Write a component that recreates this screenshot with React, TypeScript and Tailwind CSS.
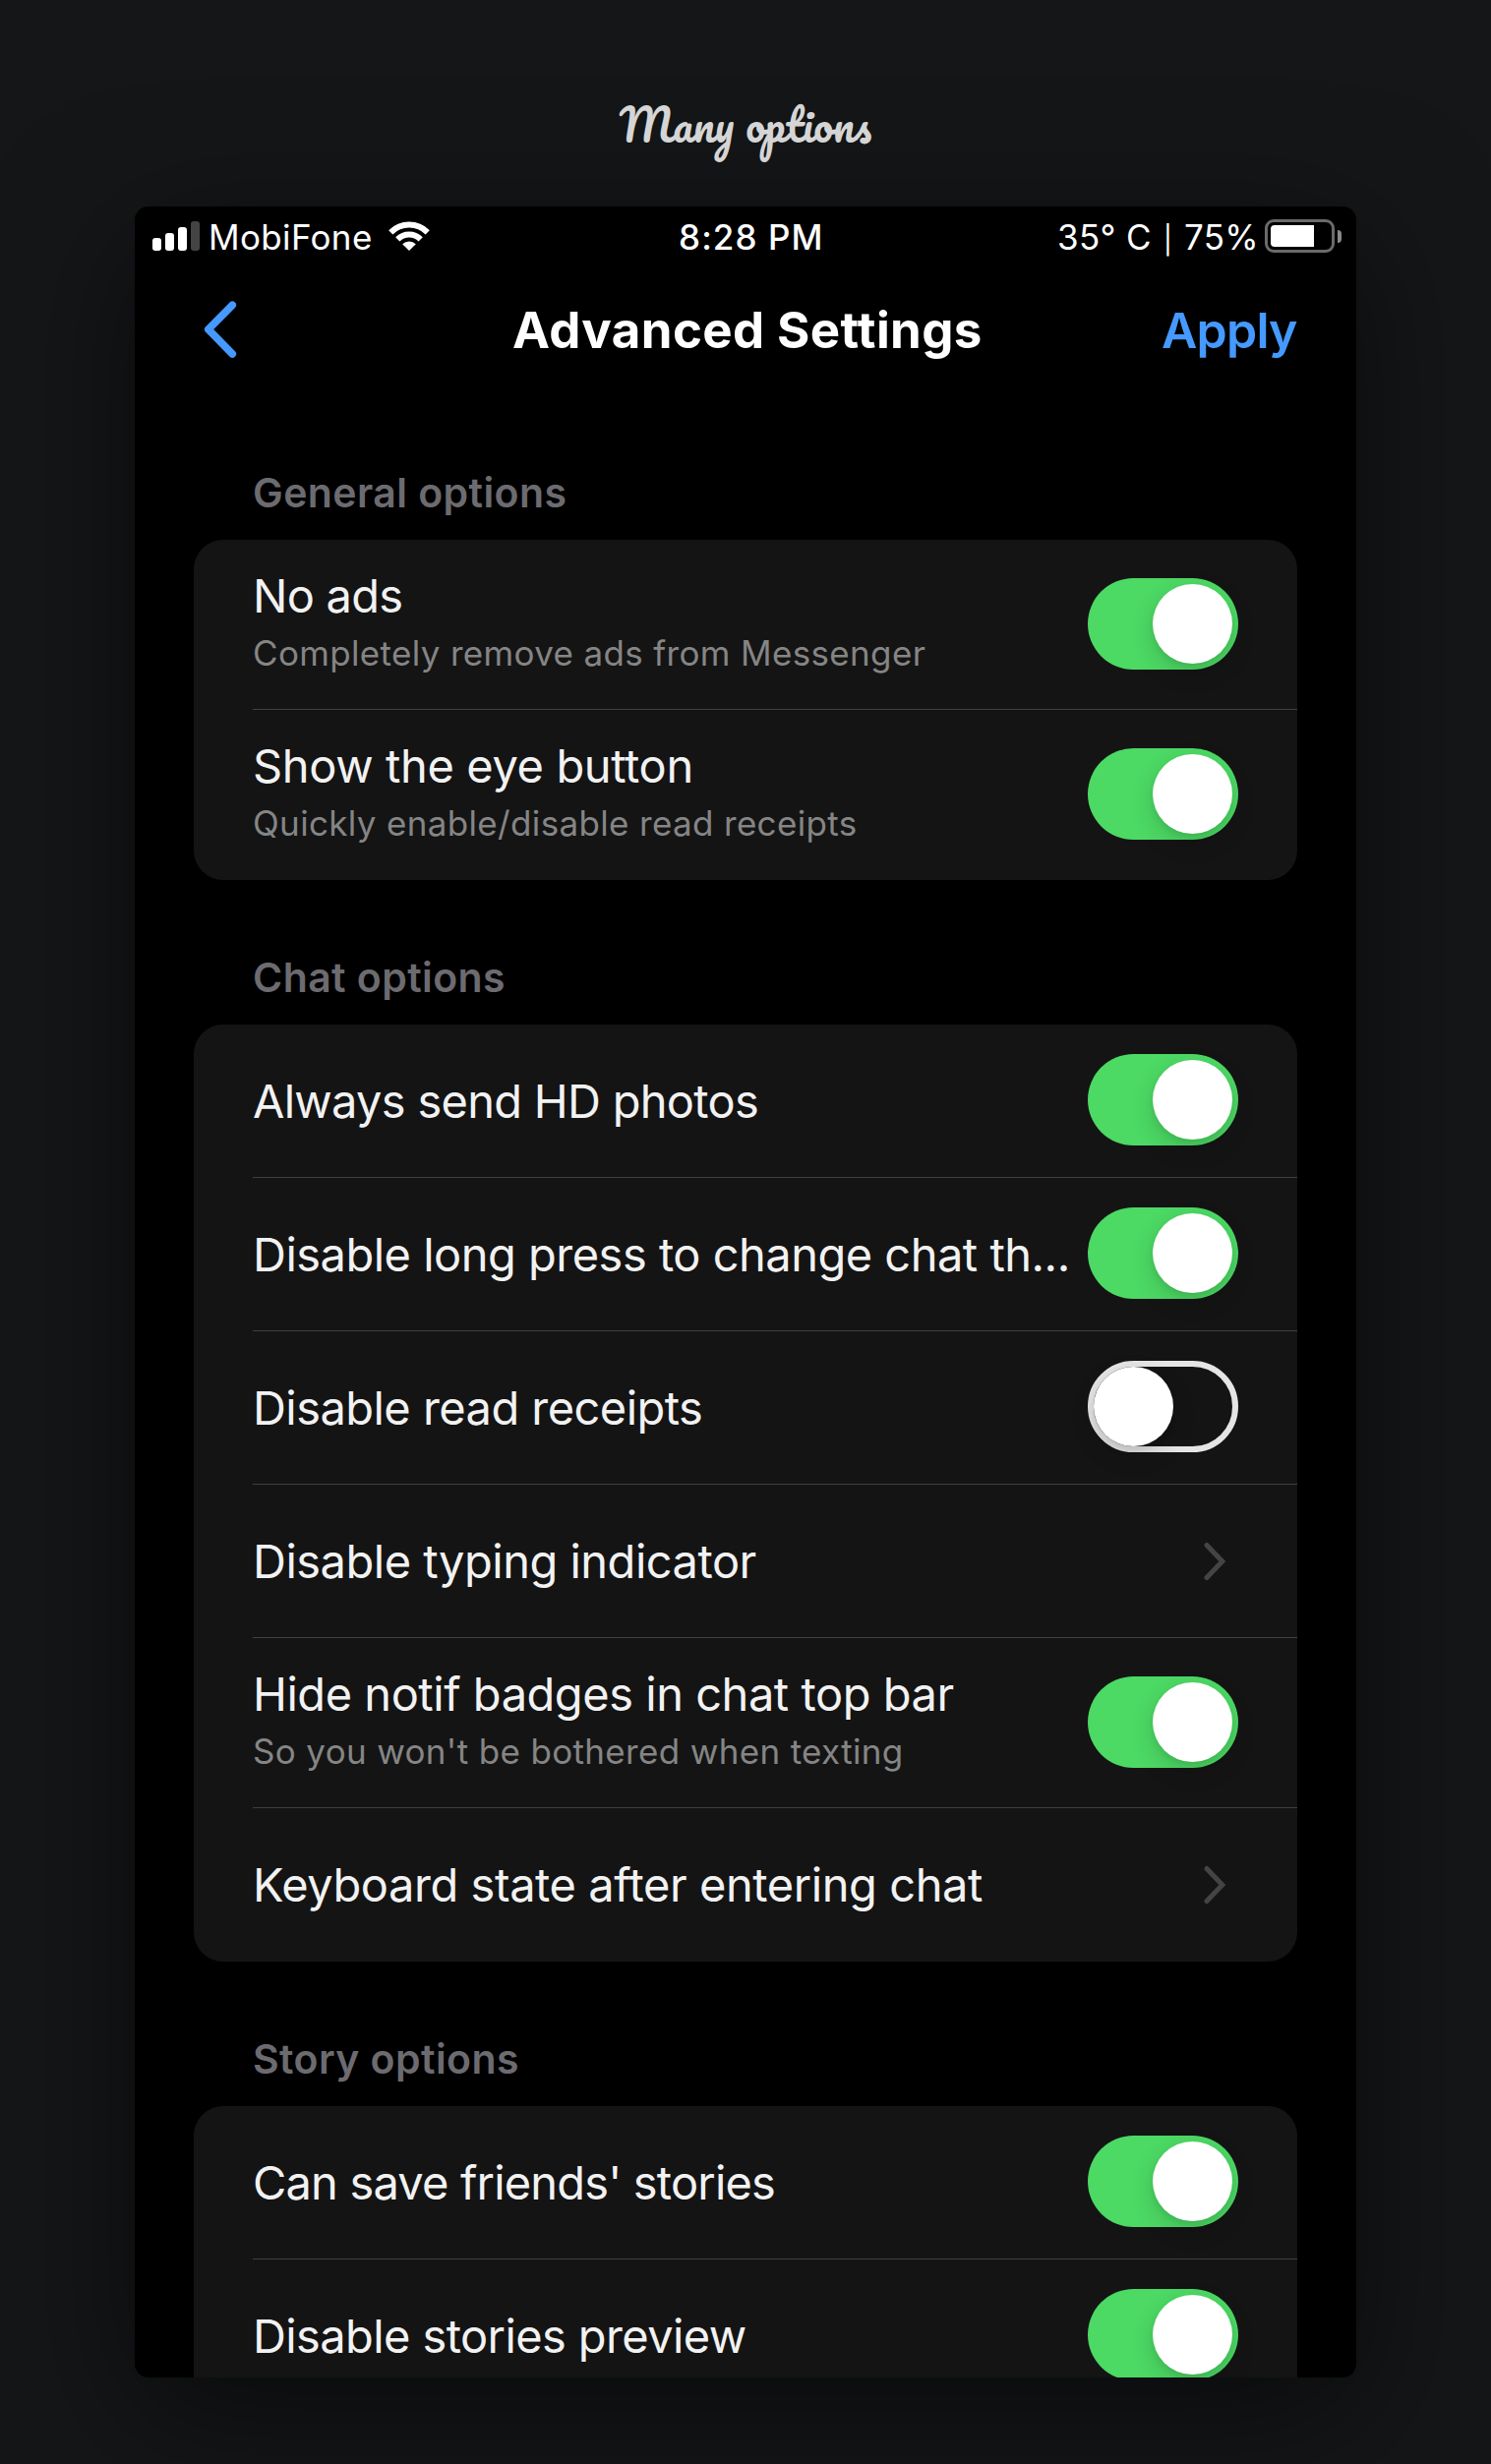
import type { ReactNode } from "react";

type Control = "on" | "off" | "link";

type Option = {
  title: string;
  tracking: string;
  subtitle?: string;
  control: Control;
};

type Section = { heading: string; options: Option[] };

const sections: Section[] = [
  {
    heading: "General options",
    options: [
      {
        title: "No ads",
        tracking: "tracking-[-0.75px]",
        subtitle: "Completely remove ads from Messenger",
        control: "on",
      },
      {
        title: "Show the eye button",
        tracking: "tracking-[-0.38px]",
        subtitle: "Quickly enable/disable read receipts",
        control: "on",
      },
    ],
  },
  {
    heading: "Chat options",
    options: [
      { title: "Always send HD photos", tracking: "tracking-[-0.72px]", control: "on" },
      {
        title: "Disable long press to change chat th...",
        tracking: "tracking-[-0.51px]",
        control: "on",
      },
      { title: "Disable read receipts", tracking: "tracking-[-0.55px]", control: "off" },
      { title: "Disable typing indicator", tracking: "tracking-[-0.5px]", control: "link" },
      {
        title: "Hide notif badges in chat top bar",
        tracking: "tracking-[-0.47px]",
        subtitle: "So you won't be bothered when texting",
        control: "on",
      },
      {
        title: "Keyboard state after entering chat",
        tracking: "tracking-[-0.44px]",
        control: "link",
      },
    ],
  },
  {
    heading: "Story options",
    options: [
      { title: "Can save friends' stories", tracking: "tracking-[-0.82px]", control: "on" },
      { title: "Disable stories preview", tracking: "tracking-[-0.6px]", control: "on" },
    ],
  },
];

function Toggle({ on }: { on: boolean }) {
  return (
    <div
      role="switch"
      aria-checked={on}
      className={
        on
          ? "flex h-[93px] w-[153px] shrink-0 justify-end rounded-full bg-[#4cd964] p-[6px]"
          : "flex h-[93px] w-[153px] shrink-0 justify-start rounded-full border-[6px] border-[#e5e5e5]"
      }
    >
      <div className="size-[81px] rounded-full bg-white shadow-[0_9px_24px_rgba(0,0,0,0.15),0_3px_6px_rgba(0,0,0,0.07)]" />
    </div>
  );
}

function Disclosure() {
  return (
    <svg className="mr-[11px] h-[40px] w-[26px] shrink-0" viewBox="0 0 26 40" fill="none">
      <path
        d="M5 3.5 20.8 20 5 36.5"
        stroke="#444444"
        strokeWidth="5"
        strokeLinecap="round"
      />
    </svg>
  );
}

function controlFor(control: Control): ReactNode {
  return control === "link" ? <Disclosure /> : <Toggle on={control === "on"} />;
}

function controlOffset(option: Option): string {
  if (option.control === "link") return "pt-[58px]";
  return option.subtitle ? "pt-[39px]" : "pt-[30px]";
}

function Row({ option, last }: { option: Option; last: boolean }) {
  return (
    <div
      className={`ml-[60px] flex items-start justify-between pr-[60px] ${
        option.subtitle ? "h-[173px]" : "h-[156px]"
      } ${last ? "" : "border-b border-[#3f3f3f]"}`}
    >
      <div className={`min-w-0 whitespace-nowrap ${option.subtitle ? "pt-[27px]" : "pt-[48px]"}`}>
        <div className={`text-[47px] leading-[60px] text-[#f2f2f2] ${option.tracking}`}>
          {option.title}
        </div>
        {option.subtitle && (
          <div className="mt-1 text-[35px] leading-[48px] tracking-[0.34px] text-[#858585]">
            {option.subtitle}
          </div>
        )}
      </div>
      <div className={controlOffset(option)}>{controlFor(option.control)}</div>
    </div>
  );
}

function StatusBar() {
  return (
    <div className="flex h-[64px] items-start text-[35px] leading-[44px] whitespace-nowrap text-white">
      <div className="mt-[15px] ml-[18px] flex h-[30px] items-end gap-[4px]">
        <div className="h-[13px] w-[9px] rounded-[3px] bg-white" />
        <div className="h-[18px] w-[9px] rounded-[3px] bg-white" />
        <div className="h-[24px] w-[9px] rounded-[3px] bg-white" />
        <div className="h-[30px] w-[9px] rounded-[3px] bg-[#444444]" />
      </div>
      <span className="mt-[9px] ml-[9px] w-[183px] tracking-[0.35px]">MobiFone</span>
      <svg className="mt-[15px] h-[30px] w-[42px]" viewBox="0 0 42 30">
        <path
          d="M2.3 11.3A26.4 26.4 0 0 1 39.7 11.3M9.3 18.3A16.6 16.6 0 0 1 32.7 18.3"
          fill="none"
          stroke="white"
          strokeWidth="6"
        />
        <path d="M21 30 14.2 23.2A9.6 9.6 0 0 1 27.8 23.2Z" fill="white" />
      </svg>
      <span className="mt-[9px] ml-[253px] w-[385px] font-[550] tracking-[1.1px]">8:28 PM</span>
      <span className="mt-[9px] w-[211px] tracking-[0.3px]">
        <span className="inline-block w-[96px]">35° C</span>
        <span className="inline-block w-[33px] text-center text-[28px]">|</span>
        75%
      </span>
      <div className="mt-[13px] flex items-center gap-[3px]">
        <div className="h-[34px] w-[71px] rounded-[9px] border-[3px] border-[#6a6a6a] p-[3px]">
          <div className="h-[22px] w-[44px] rounded-l-[4px] bg-white" />
        </div>
        <div className="h-[13px] w-[4px] rounded-r-full bg-[#8a8a8a]" />
      </div>
    </div>
  );
}

function NavBar() {
  return (
    <div className="flex h-[199px] items-start pt-[30px] text-[50px] leading-[64px] whitespace-nowrap">
      <svg className="mt-[1px] ml-[69px] h-[60px] w-[36px]" viewBox="0 0 36 60" fill="none">
        <path
          d="M30.3 5.3 5.8 30 30.3 55"
          stroke="#4599ff"
          strokeWidth="7.6"
          strokeLinecap="round"
          strokeLinejoin="round"
        />
      </svg>
      <h1 className="ml-[279px] w-[660px] text-[51px] font-[670] tracking-[0.38px] text-white">
        Advanced Settings
      </h1>
      <button className="font-[560] tracking-[-0.8px] text-[#4599ff]">Apply</button>
    </div>
  );
}

export default function App() {
  return (
    <div className="h-[2506px] w-[1516px] overflow-hidden bg-[#141617] pt-[87px] font-['Inter',sans-serif]">
      <p className="text-center font-['Pacifico',cursive] text-[44px] leading-[80px] text-[#d5d5d5]">
        Many options
      </p>
      <main className="mx-auto mt-[43px] h-[2208px] w-[1242px] overflow-hidden rounded-[14px] bg-black shadow-[0_36px_140px_rgba(0,0,0,0.5)]">
        <StatusBar />
        <NavBar />
        <div className="flex flex-col gap-[71px] px-[60px]">
          {sections.map((section) => (
            <section key={section.heading}>
              <h2 className="mb-5 pl-[60px] text-[41px] leading-[56px] font-semibold tracking-[0.42px] text-[#6c6b70]">
                {section.heading}
              </h2>
              <div className="rounded-[30px] bg-[#141414]">
                {section.options.map((option, i) => (
                  <Row
                    key={option.title}
                    option={option}
                    last={i === section.options.length - 1}
                  />
                ))}
              </div>
            </section>
          ))}
        </div>
      </main>
    </div>
  );
}
